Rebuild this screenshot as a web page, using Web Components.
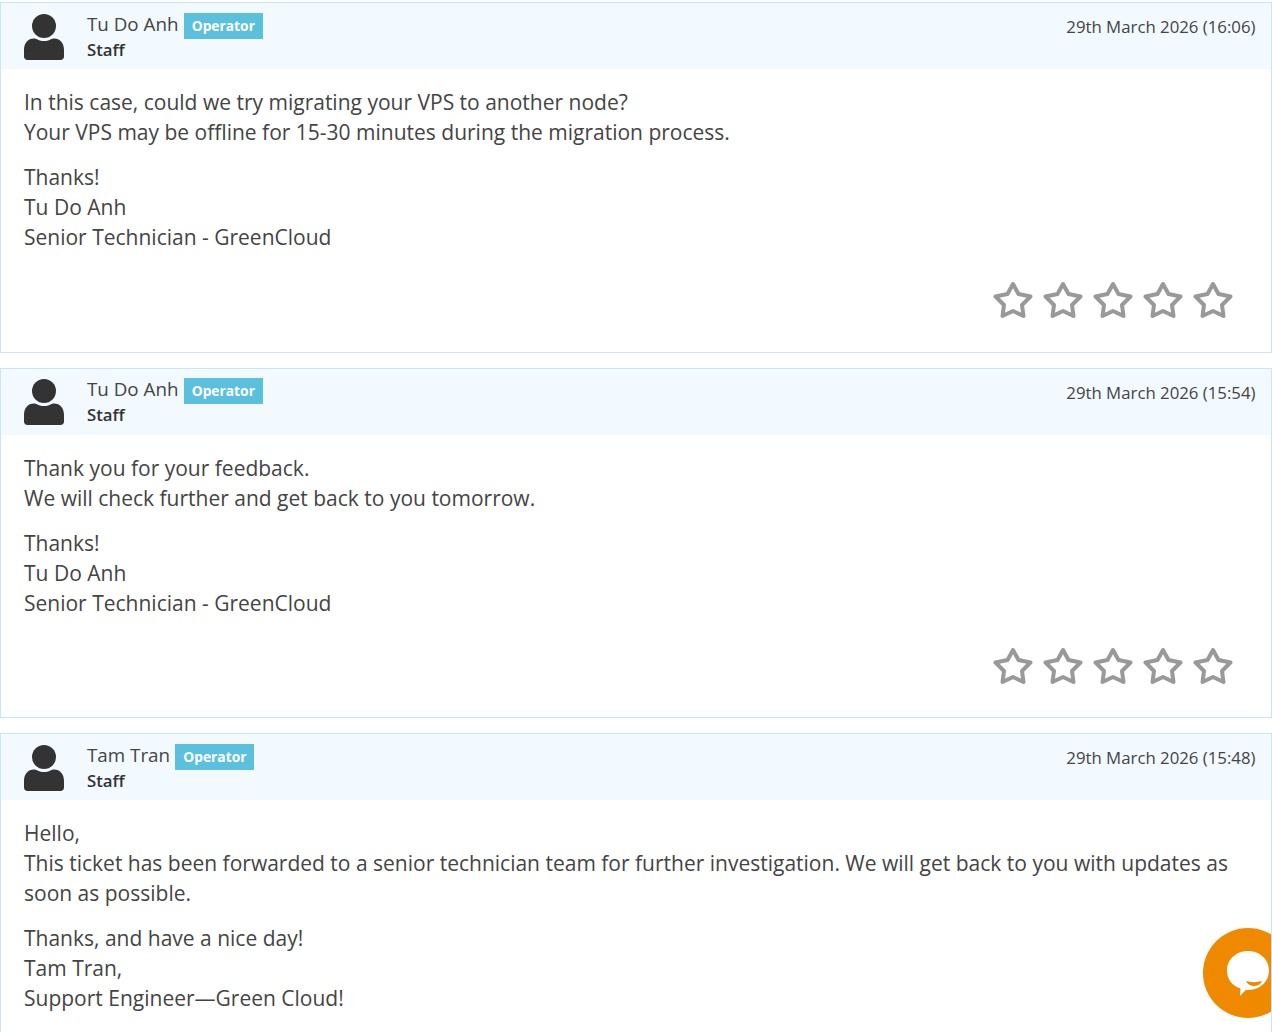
<!DOCTYPE html>
<html>
<head>
<meta charset="utf-8">
<style>
  html, body { margin: 0; height: 1032px; overflow: hidden; background: #fff; }
  body { padding-top: 2px; box-sizing: border-box; font-family: "Open Sans", sans-serif; color: #333; }
  ticket-reply { margin-bottom: 15px; }
  p { margin: 0 0 15px; }
</style>
</head>
<body>
<ticket-reply name="Tu Do Anh" date="29th March 2026 (16:06)">
  <p>In this case, could we try migrating your VPS to another node?<br>Your VPS may be offline for 15-30 minutes during the migration process.</p>
  <p>Thanks!<br>Tu Do Anh<br>Senior Technician - GreenCloud</p>
</ticket-reply>
<ticket-reply name="Tu Do Anh" date="29th March 2026 (15:54)">
  <p>Thank you for your feedback.<br>We will check further and get back to you tomorrow.</p>
  <p>Thanks!<br>Tu Do Anh<br>Senior Technician - GreenCloud</p>
</ticket-reply>
<ticket-reply name="Tam Tran" date="29th March 2026 (15:48)">
  <p>Hello,<br>This ticket has been forwarded to a senior technician team for further investigation. We will get back to you with updates as soon as possible.</p>
  <p>Thanks, and have a nice day!<br>Tam Tran,<br>Support Engineer—Green Cloud!</p>
</ticket-reply>
<chat-bubble></chat-bubble>

<script>
const star = `<svg width="40" height="38" viewBox="0 0 40 38"><path d="M20 3l5.500 10 12 2.500-8.500 8.500 1.500 11-10.500-5-10.500 5 1.500-11-8.500-8.500 12-2.500z" fill="none" stroke="#999" stroke-width="4" stroke-linejoin="round"/></svg>`;

const replyTemplate = document.createElement("template");
replyTemplate.innerHTML = `
  <style>
    :host {
      display: block;
      border: 1px solid #c9e4fb;
      min-height: 348.5px;
    }
    .head {
      display: flex;
      justify-content: space-between;
      height: 66px;
      background: #f2f9ff;
      padding: 0 15.500px 0 22px;
    }
    .who { display: flex; gap: 22px; }
    .avatar { margin-top: 10.750px; }
    .name {
      display: flex;
      align-items: flex-start;
      gap: 5.200px;
      margin-top: 9.750px;
      height: 26px;
      font-size: 18.800px;
      line-height: 22px;
      color: #444;
    }
    .badge {
      background: #5bc0de;
      color: #fff;
      font-size: 13.800px;
      font-weight: 700;
      line-height: 26px;
      padding: 0 8px;
    }
    .role { font-size: 16.800px; font-weight: 600; line-height: 22px; }
    .date { font-size: 16.800px; line-height: 22px; margin-top: 13px; color: #444; }
    .body {
      padding: 18px 23px 0;
      font-size: 21px;
      line-height: 30px;
      color: #444;
    }
    .stars {
      display: flex;
      justify-content: flex-end;
      gap: 10px;
      padding: 14px 38px 0 0;
    }
    svg { display: block; }
  </style>
  <div class="head">
    <div class="who">
      <svg class="avatar" width="42" height="47" viewBox="0 0 42 47">
        <circle cx="21" cy="12" r="12" fill="#333"/>
        <path d="M1 36c0-7 4-11.500 10-11.500 1 0 2 .3 3.500 1 2 1 4.500 1.500 6.500 1.500s4.500-.5 6.500-1.500c1.500-.7 2.500-1 3.500-1 6 0 10 4.500 10 11.500v6.500c0 2-1.500 3.500-3.500 3.500h-33C2.500 46 1 44.500 1 42.500z" fill="#333"/>
      </svg>
      <div>
        <div class="name"><span id="name"></span><span class="badge">Operator</span></div>
        <div class="role">Staff</div>
      </div>
    </div>
    <div class="date" id="date"></div>
  </div>
  <div class="body"><slot></slot></div>
  <div class="stars">${star.repeat(5)}</div>
`;

customElements.define(
  "ticket-reply",
  class extends HTMLElement {
    constructor() {
      super()
        .attachShadow({ mode: "open" })
        .appendChild(replyTemplate.content.cloneNode(true));
    }

    connectedCallback() {
      this.shadowRoot.getElementById("name").textContent = this.getAttribute("name");
      this.shadowRoot.getElementById("date").textContent = this.getAttribute("date");
    }
  }
);

const bubbleTemplate = document.createElement("template");
bubbleTemplate.innerHTML = `
  <style>
    :host {
      position: fixed;
      right: 1px;
      top: 928px;
      width: 68px;
      height: 90px;
      overflow: hidden;
    }
    svg { display: block; }
  </style>
  <svg width="68" height="90" viewBox="0 0 68 90">
    <circle cx="45" cy="45" r="45" fill="#ee8900"/>
    <path d="M45 23c12 0 21 8.500 21 19.500S57 62 45 62c-.8 0-1.500 0-2.200-.1L37 68l.5-7.500C29 58 24 51 24 42.500 24 31.500 33 23 45 23z" fill="#fff"/>
    <path d="M43 53c5 1.500 11 1.500 16 0-1.500 3.500-4.500 5-8 5s-6.500-1.500-8-5z" fill="#ee8900"/>
  </svg>
`;

customElements.define(
  "chat-bubble",
  class extends HTMLElement {
    constructor() {
      super()
        .attachShadow({ mode: "open" })
        .appendChild(bubbleTemplate.content.cloneNode(true));
    }
  }
);
</script>
</body>
</html>
